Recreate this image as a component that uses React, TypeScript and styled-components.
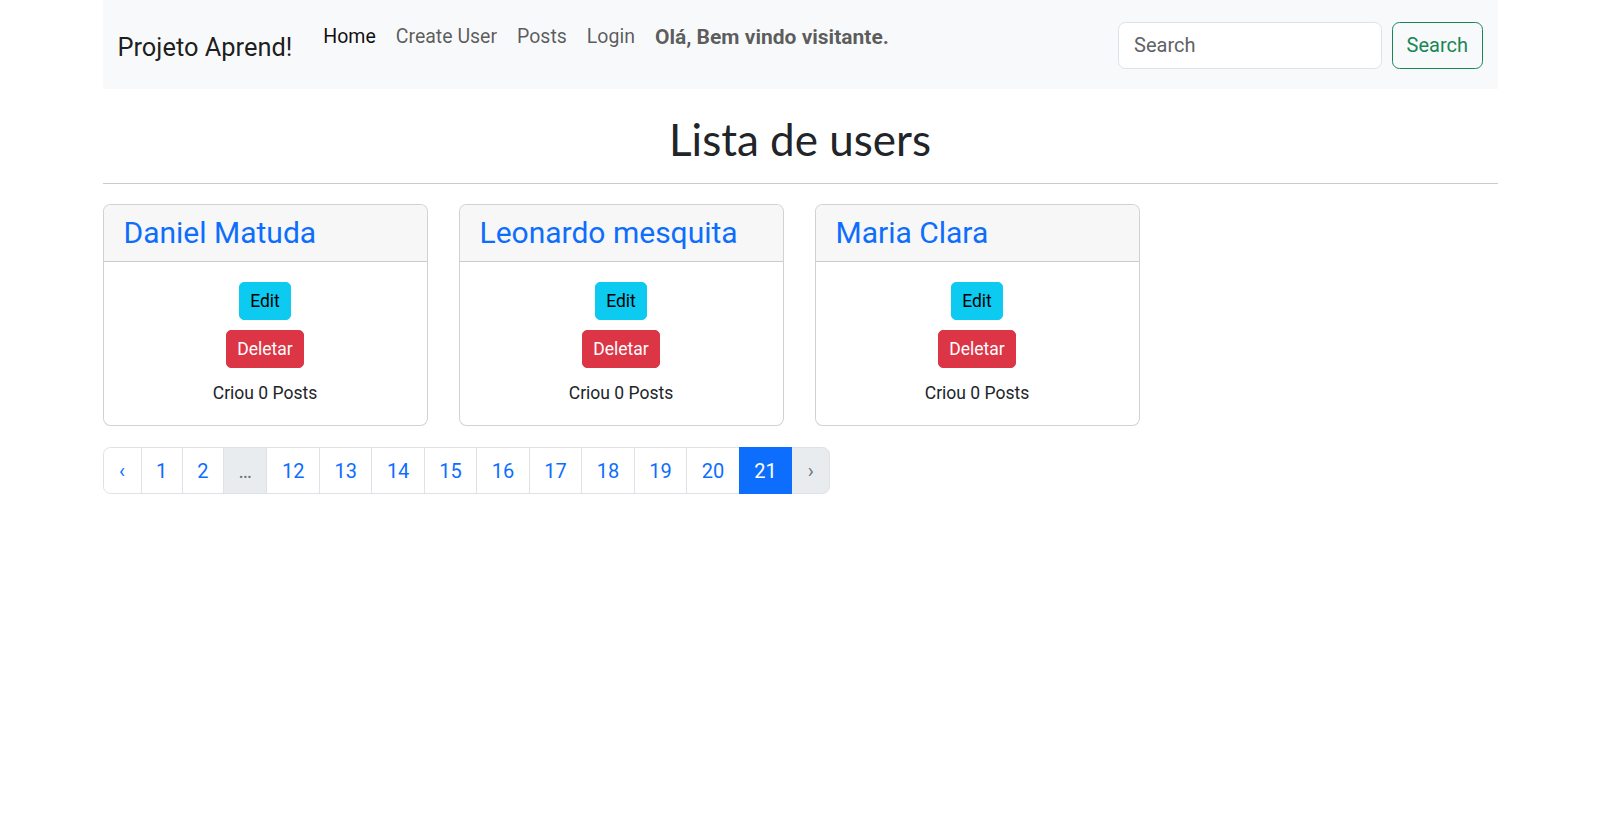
import React from "react";
import styled, { createGlobalStyle } from "styled-components";

const GlobalStyle = createGlobalStyle`
  *, *::before, *::after { box-sizing: border-box; }
  body {
    margin: 0;
    font-family: Roboto, "Noto Sans", sans-serif;
    font-size: 20px;
    line-height: 1.5;
    color: #212529;
    background: #fff;
  }
`;

const Container = styled.div`
  width: 1395px;
  margin: 0 auto;
`;

const Navbar = styled.nav`
  display: flex;
  align-items: center;
  height: 89px;
  padding: 0 15px;
  background: #f8f9fa;
`;

const Brand = styled.a`
  font-size: 25.4px;
  line-height: 37.5px;
  color: rgba(0, 0, 0, 0.9);
  margin-right: 21px;
  margin-top: 6px;
  text-decoration: none;
`;

const NavList = styled.ul`
  display: flex;
  list-style: none;
  margin: 0 0 15px 0;
  padding: 0;
`;

const NavLink = styled.a<{ $active?: boolean; $bold?: boolean }>`
  display: block;
  padding: 10px 10px;
  line-height: 30px;
  font-size: ${(p) => (p.$bold ? "21px" : "19.5px")};
  text-decoration: none;
  font-weight: ${(p) => (p.$bold ? 700 : 400)};
  color: ${(p) => (p.$active ? "rgba(0,0,0,0.95)" : "rgba(0,0,0,0.65)")};
`;

const SearchForm = styled.form`
  display: flex;
  gap: 10px;
  margin-left: auto;
  margin-top: 1px;
`;

const SearchInput = styled.input`
  width: 264px;
  height: 47px;
  padding: 7.5px 15px;
  font: inherit;
  font-size: 20px;
  color: #212529;
  background: #fff;
  border: 1px solid #dee2e6;
  border-radius: 7.5px;
  outline: none;
  &::placeholder {
    color: #5f6266;
  }
`;

const OutlineButton = styled.button`
  height: 47px;
  padding: 7.5px 13.5px;
  font: inherit;
  font-size: 20px;
  line-height: 30px;
  color: #198754;
  background: transparent;
  border: 1px solid #198754;
  border-radius: 7.5px;
`;

const Title = styled.h1`
  margin: 14px 0 10px;
  padding-top: 12px;
  text-align: center;
  font-family: Lato, "Noto Sans", sans-serif;
  font-size: 44px;
  line-height: 48px;
  font-weight: 400;
  color: #212529;
`;

const Divider = styled.hr`
  margin: 20px 0;
  border: 0;
  border-top: 1px solid #c9cacb;
`;

const CardRow = styled.div`
  display: flex;
  gap: 31px;
  margin-bottom: 21px;
`;

const Card = styled.div`
  width: 325px;
  border: 1px solid rgba(0, 0, 0, 0.175);
  border-radius: 7.5px;
  overflow: hidden;
  background: #fff;
`;

const CardHeader = styled.div`
  padding: 10px 20px;
  background: #f7f7f7;
  border-bottom: 1px solid rgba(0, 0, 0, 0.175);
`;

const CardName = styled.a`
  display: block;
  font-size: 30px;
  line-height: 36px;
  color: #0d6efd;
  text-decoration: none;
`;

const CardBody = styled.div`
  display: flex;
  flex-direction: column;
  align-items: center;
  padding: 20px 20px 17px;
`;

const SmallButton = styled.button<{ $variant: "info" | "danger" }>`
  height: 38px;
  padding: 5px 10px;
  font: inherit;
  font-size: 17.5px;
  line-height: 26px;
  border-radius: 5px;
  border: 1px solid ${(p) => (p.$variant === "info" ? "#0dcaf0" : "#dc3545")};
  background: ${(p) => (p.$variant === "info" ? "#0dcaf0" : "#dc3545")};
  color: ${(p) => (p.$variant === "info" ? "#000" : "#fff")};
  margin-bottom: 10px;
`;

const PostCount = styled.p`
  margin: 0;
  line-height: 30px;
  font-size: 17.5px;
  color: #212529;
`;

const Pagination = styled.ul`
  display: inline-flex;
  list-style: none;
  margin: 0;
  padding: 0;
`;

const PageItem = styled.li<{ $state?: "active" | "disabled"; $arrow?: boolean }>`
  height: 47px;
  padding: 7.5px ${(p) => (p.$arrow ? "15.5px" : "14.5px")};
  line-height: 30px;
  font-size: 20px;
  border: 1px solid ${(p) => (p.$state === "active" ? "#0d6efd" : "#dee2e6")};
  margin-left: -1px;
  background: ${(p) =>
    p.$state === "active" ? "#0d6efd" : p.$state === "disabled" ? "#e9ecef" : "#fff"};
  color: ${(p) =>
    p.$state === "active" ? "#fff" : p.$state === "disabled" ? "#6c757d" : "#0d6efd"};
  position: relative;
  z-index: ${(p) => (p.$state === "active" ? 1 : 0)};
  &:first-child {
    margin-left: 0;
    border-radius: 7.5px 0 0 7.5px;
  }
  &:last-child {
    border-radius: 0 7.5px 7.5px 0;
  }
`;

const users = ["Daniel Matuda", "Leonardo mesquita", "Maria Clara"];

type Page = { label: string; state?: "active" | "disabled"; arrow?: boolean };
const pages: Page[] = [
  { label: "‹", arrow: true },
  { label: "1" },
  { label: "2" },
  { label: "…", state: "disabled" },
  ...["12", "13", "14", "15", "16", "17", "18", "19", "20"].map((l) => ({ label: l })),
  { label: "21", state: "active" },
  { label: "›", state: "disabled", arrow: true },
];

export default function App() {
  return (
    <>
      <GlobalStyle />
      <Container>
        <Navbar>
          <Brand href="#">Projeto Aprend!</Brand>
          <NavList>
            <li><NavLink $active href="#">Home</NavLink></li>
            <li><NavLink href="#">Create User</NavLink></li>
            <li><NavLink href="#">Posts</NavLink></li>
            <li><NavLink href="#">Login</NavLink></li>
            <li><NavLink $bold href="#">Olá, Bem vindo visitante.</NavLink></li>
          </NavList>
          <SearchForm onSubmit={(e) => e.preventDefault()}>
            <SearchInput placeholder="Search" />
            <OutlineButton type="submit">Search</OutlineButton>
          </SearchForm>
        </Navbar>
        <Title>Lista de users</Title>
        <Divider />
        <CardRow>
          {users.map((u) => (
            <Card key={u}>
              <CardHeader>
                <CardName href="#">{u}</CardName>
              </CardHeader>
              <CardBody>
                <SmallButton $variant="info">Edit</SmallButton>
                <SmallButton $variant="danger">Deletar</SmallButton>
                <PostCount>Criou 0 Posts</PostCount>
              </CardBody>
            </Card>
          ))}
        </CardRow>
        <Pagination>
          {pages.map((p, i) => (
            <PageItem key={i} $state={p.state} $arrow={p.arrow}>{p.label}</PageItem>
          ))}
        </Pagination>
      </Container>
    </>
  );
}
